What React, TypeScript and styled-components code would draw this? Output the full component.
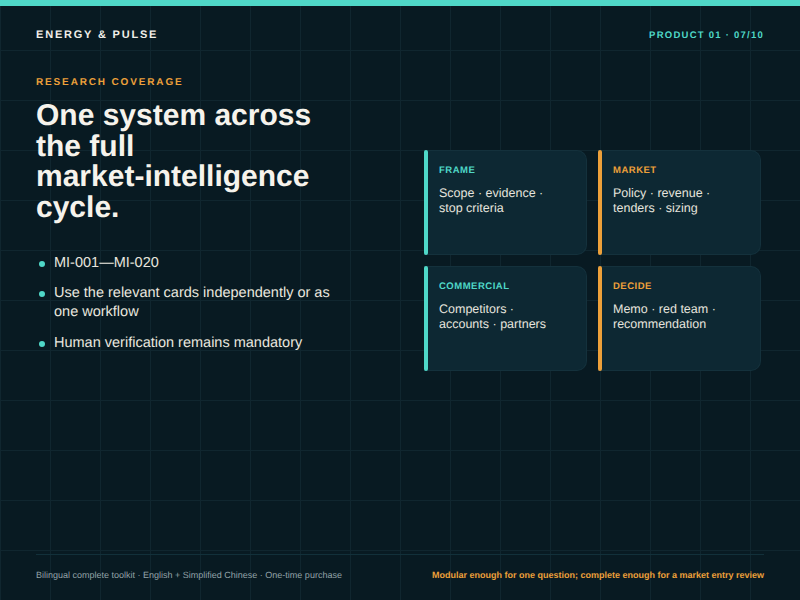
import React from 'react';
import styled, { createGlobalStyle } from 'styled-components';

const TEAL = '#4fd8c8';
const ORANGE = '#eda03a';

const GlobalStyle = createGlobalStyle`
  html, body {
    margin: 0;
    padding: 0;
    background: #081a22;
  }
  * {
    box-sizing: border-box;
  }
`;

const Slide = styled.div`
  width: 800px;
  height: 600px;
  overflow: hidden;
  display: flex;
  flex-direction: column;
  border-top: 6px solid ${TEAL};
  padding: 22px 36px 0;
  font-family: 'Liberation Sans', Arial, sans-serif;
  text-rendering: geometricPrecision;
  color: #f4f1ea;
  background-color: #081a22;
  background-image:
    linear-gradient(to right, #10262f 1px, transparent 1px),
    linear-gradient(to bottom, #10262f 1px, transparent 1px);
  background-size: 50px 50px;
  background-position: 0 0;
  background-origin: border-box;
`;

const Header = styled.header`
  display: flex;
  justify-content: space-between;
  align-items: center;
  height: 14px;
`;

const Brand = styled.div`
  font-size: 11px;
  font-weight: 700;
  letter-spacing: 1.8px;
  color: #f0eee8;
`;

const PageTag = styled.div`
  font-size: 9.5px;
  font-weight: 700;
  letter-spacing: 1.25px;
  color: ${TEAL};
`;

const Main = styled.main`
  flex: 1;
  display: flex;
  justify-content: space-between;
  padding-right: 3px;
`;

const Left = styled.section`
  width: 310px;
  padding-top: 35px;
`;

const Eyebrow = styled.div`
  font-size: 10px;
  line-height: 12px;
  font-weight: 700;
  letter-spacing: 1.85px;
  color: ${ORANGE};
`;

const Title = styled.h1`
  margin: 12px 0 0;
  font-size: 30px;
  line-height: 30.7px;
  font-weight: 700;
  color: #f6f3ec;
`;

const NoBreak = styled.span`
  white-space: nowrap;
`;

const Bullets = styled.ul`
  list-style: none;
  margin: 30px 0 0;
  padding: 0;
  display: flex;
  flex-direction: column;
  gap: 11.5px;
`;

const Bullet = styled.li`
  position: relative;
  padding-left: 18px;
  font-size: 14.5px;
  line-height: 19px;
  color: #e9e6df;

  &::before {
    content: '';
    position: absolute;
    left: 3px;
    top: 7px;
    width: 6px;
    height: 6px;
    border-radius: 50%;
    background: ${TEAL};
  }
`;

const CardGrid = styled.div`
  align-self: flex-start;
  margin-top: 108px;
  display: grid;
  grid-template-columns: 163px 163px;
  grid-auto-rows: 105px;
  gap: 11px;
`;

const Card = styled.article<{ $accent: string }>`
  position: relative;
  border: 1px solid #14313c;
  border-left: 0;
  border-radius: 0 10px 10px 0;
  background: #0d2833;
  padding: 14px 11px 0 15px;

  &::before {
    content: '';
    position: absolute;
    left: 0;
    top: -1px;
    bottom: -1px;
    width: 4px;
    border-radius: 2px;
    background: ${(p) => p.$accent};
  }
`;

const CardLabel = styled.div<{ $accent: string }>`
  font-size: 9.5px;
  line-height: 12px;
  font-weight: 700;
  letter-spacing: 0.5px;
  color: ${(p) => p.$accent};
`;

const CardText = styled.p`
  margin: 9px 0 0;
  font-size: 12.5px;
  line-height: 15.4px;
  color: #e6e4de;
`;

const Footer = styled.footer`
  height: 46px;
  border-top: 1px solid #12303a;
  display: flex;
  justify-content: space-between;
  align-items: flex-start;
  padding-top: 14px;
  font-size: 9px;
  line-height: 12px;
`;

const FootNote = styled.div`
  color: #93a3a8;
`;

const FootClaim = styled.div`
  font-weight: 700;
  color: ${ORANGE};
`;

const cards = [
  { label: 'FRAME', accent: TEAL, text: ['Scope · evidence ·', 'stop criteria'] },
  { label: 'MARKET', accent: ORANGE, text: ['Policy · revenue ·', 'tenders · sizing'] },
  { label: 'COMMERCIAL', accent: TEAL, text: ['Competitors ·', 'accounts · partners'] },
  { label: 'DECIDE', accent: ORANGE, text: ['Memo · red team ·', 'recommendation'] },
];

const App: React.FC = () => {
  return (
    <>
      <GlobalStyle />
      <Slide>
        <Header>
          <Brand>ENERGY &amp; PULSE</Brand>
          <PageTag>PRODUCT 01 · 07/10</PageTag>
        </Header>
        <Main>
          <Left>
            <Eyebrow>RESEARCH COVERAGE</Eyebrow>
            <Title>
              One system across the full <NoBreak>market-intelligence</NoBreak> cycle.
            </Title>
            <Bullets>
              <Bullet>MI-001—MI-020</Bullet>
              <Bullet>Use the relevant cards independently or as one workflow</Bullet>
              <Bullet>Human verification remains mandatory</Bullet>
            </Bullets>
          </Left>
          <CardGrid>
            {cards.map((c) => (
              <Card key={c.label} $accent={c.accent}>
                <CardLabel $accent={c.accent}>{c.label}</CardLabel>
                <CardText>
                  {c.text[0]}
                  <br />
                  {c.text[1]}
                </CardText>
              </Card>
            ))}
          </CardGrid>
        </Main>
        <Footer>
          <FootNote>Bilingual complete toolkit · English + Simplified Chinese · One-time purchase</FootNote>
          <FootClaim>Modular enough for one question; complete enough for a market entry review</FootClaim>
        </Footer>
      </Slide>
    </>
  );
};

export default App;
